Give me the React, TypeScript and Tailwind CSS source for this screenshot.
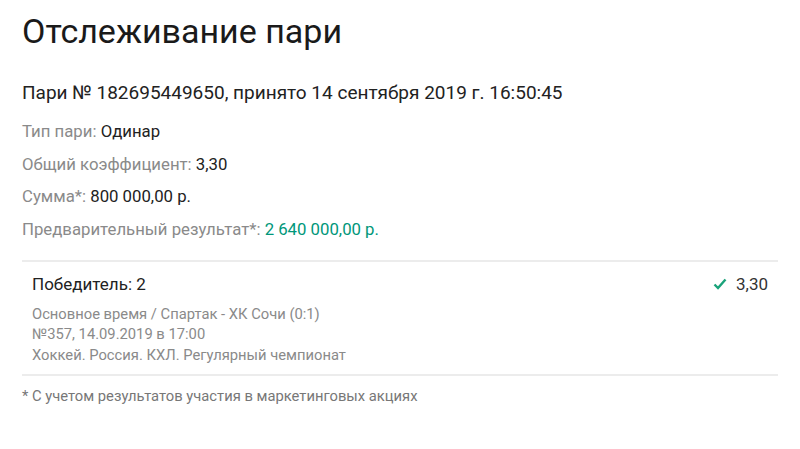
import React from 'react';

const rows: { label: string; value: string; accent?: boolean }[] = [
  { label: 'Тип пари:', value: 'Одинар' },
  { label: 'Общий коэффициент:', value: '3,30' },
  { label: 'Сумма*:', value: '800 000,00 р.' },
  { label: 'Предварительный результат*:', value: '2 640 000,00 р.', accent: true },
];

const App: React.FC = () => {
  return (
    <div className="w-[800px] h-[449px] bg-white text-[#222] px-[22px] pt-[9px]" style={{ fontFamily: 'Roboto, sans-serif' }}>
      <h1 className="text-[34px] leading-[44px] text-[#1a1a1a]">Отслеживание пари</h1>
      <div className="mt-[27px] text-[19px] leading-[26px] text-[#222]">
        Пари № 182695449650, принято 14 сентября 2019 г. 16:50:45
      </div>
      <div className="mt-[9px] flex flex-col">
        {rows.map((r) => (
          <div key={r.label} className="text-[16.75px] leading-[32.7px]">
            <span className="text-[#8a8a8a]">{r.label}</span>{' '}
            <span className={r.accent ? 'text-[#00977a]' : 'text-[#222]'}>{r.value}</span>
          </div>
        ))}
      </div>
      <div className="mt-[14px] border-t-2 border-[#ececec] px-[10px] pt-[10px] pb-[9px]">
        <div className="flex justify-between items-center text-[17px] leading-[24px]">
          <span>Победитель: 2</span>
          <span className="flex items-center gap-[9px] text-[#333]">
            <svg width="14" height="12" viewBox="0 0 14 12" fill="none">
              <path d="M1.5 6.5 L5 10 L12.5 1.5" stroke="#1aa37a" strokeWidth="2.4" />
            </svg>
            3,30
          </span>
        </div>
        <div className="mt-[8px] text-[14.75px] leading-[20.5px] text-[#8a8a8a]">
          <div>Основное время / Спартак - ХК Сочи (0:1)</div>
          <div>№357, 14.09.2019 в 17:00</div>
          <div>Хоккей. Россия. КХЛ. Регулярный чемпионат</div>
        </div>
      </div>
      <div className="border-t-2 border-[#ececec] pt-[10px] text-[14.75px] leading-[20px] text-[#777]">
        * С учетом результатов участия в маркетинговых акциях
      </div>
    </div>
  );
};

export default App;
